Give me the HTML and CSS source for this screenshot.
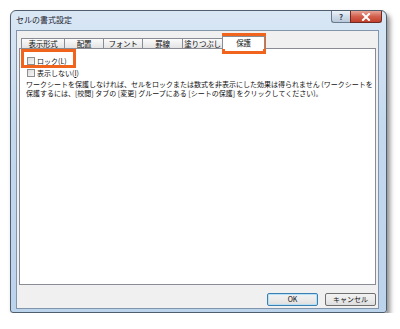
FILE: index.html
```html
<!DOCTYPE html>
<html lang="ja">
<head>
  <meta charset="UTF-8" />
  <title>セルの書式設定</title>
  <link rel="stylesheet" href="styles.css">
</head>
<body>

  <!-- Dialog window -->
  <div class="window">
    <div class="titlebar">
      <span class="title">セルの書式設定</span>
      <div class="caption">
        <span class="btn-help">?</span>
        <span class="btn-close">
          <svg width="10" height="8" viewBox="0 0 10 8">
            <path d="M2 1 L8 7 M8 1 L2 7" stroke="#fff" stroke-width="2" stroke-linecap="square" />
          </svg>
        </span>
      </div>
    </div>

    <div class="client">
      <!-- Tabs -->
      <div class="tabs">
        <span class="tab">表示形式</span>
        <span class="tab">配置</span>
        <span class="tab">フォント</span>
        <span class="tab">罫線</span>
        <span class="tab">塗りつぶし</span>
        <span class="tab active">保護</span>
      </div>

      <div class="panel">
        <label class="check"><span class="box"></span>ロック(<u>L</u>)</label>
        <label class="check"><span class="box"></span>表示しない(<u>I</u>)</label>
        <p class="note">
          ワークシートを保護しなければ、セルをロックまたは数式を非表示にした効果は得られません (ワークシートを<br>
          保護するには、[校閲] タブの [変更] グループにある [シートの保護] をクリックしてください)。
        </p>
      </div>

      <div class="buttons">
        <button type="button" class="default">OK</button>
        <button type="button">キャンセル</button>
      </div>
    </div>

    <!-- Highlight marks -->
    <span class="mark mark-tab"></span>
    <span class="mark mark-lock"></span>
  </div>

</body>
</html>
```

FILE: styles.css
```css
/* Base */
body {
  margin: 0;
  background: #fff;
  font-family: "Noto Sans CJK JP", "Noto Sans", sans-serif;
  color: #111;
}

/* Window frame */
.window {
  position: relative;
  margin: 10px 0 0 10px;
  width: 377px;
  height: 303px;
  box-sizing: border-box;
  border: 1px solid #4f5d6c;
  border-radius: 6px 6px 3px 3px;
  background: linear-gradient(#d9e7f5, #c4d9ee 40%, #bcd3ec);
  box-shadow: 3px 4px 5px rgba(0, 0, 0, 0.45);
  padding: 0 7px 3px 5px;
  display: flex;
  flex-direction: column;
}

.titlebar {
  height: 19px;
  display: flex;
  align-items: flex-start;
}

.title {
  font-size: 8px;
  line-height: 10px;
  margin-top: 4px;
  color: #1e2530;
}

.caption {
  margin-left: auto;
  margin-right: -3px;
  display: flex;
}

.btn-help {
  width: 19px;
  height: 12px;
  box-sizing: border-box;
  border: 1px solid #6a7a8c;
  border-top: none;
  border-right: none;
  border-radius: 0 0 0 3px;
  background: linear-gradient(#eef3f9, #cfdbe8 50%, #bac9da);
  font-size: 8px;
  line-height: 11px;
  text-align: center;
  font-weight: bold;
  color: #3a4656;
}

.btn-close {
  width: 32px;
  height: 12px;
  box-sizing: border-box;
  border: 1px solid #6e2a22;
  border-top: none;
  border-radius: 0 0 3px 0;
  background: linear-gradient(#e8a497, #d2604c 50%, #c2402c);
  display: flex;
  align-items: center;
  justify-content: center;
}

/* Client area */
.client {
  flex: 1;
  border: 1px solid #8395ab;
  background: #f0f0f0;
  padding: 5px 2px 0 2px;
  display: flex;
  flex-direction: column;
}

.tabs {
  height: 12px;
  display: grid;
  grid-template-columns: 44px 39px 39px 40px 40px 40px;
  align-items: end;
  padding-left: 2px;
}

.tab {
  height: 10px;
  box-sizing: border-box;
  border: 1px solid #898c95;
  border-bottom: none;
  border-left: none;
  background: linear-gradient(#fbfbfb, #e4e4e4);
  font-size: 7.5px;
  line-height: 9px;
  letter-spacing: -0.2px;
  text-align: center;
  white-space: nowrap;
}

.tab:first-child {
  border-left: 1px solid #898c95;
}

.tab.active {
  height: 13px;
  margin: 0 -2px -1px -1px;
  border-left: 1px solid #898c95;
  background: #fff;
  position: relative;
  z-index: 1;
  line-height: 11px;
}

.panel {
  height: 237px;
  box-sizing: border-box;
  border: 1px solid #898c95;
  background: #fff;
  padding: 7px 6px 0 7px;
}

.check {
  display: flex;
  align-items: center;
  height: 10px;
  font-size: 7px;
  margin-bottom: 2px;
}

.box {
  width: 8px;
  height: 8px;
  box-sizing: border-box;
  border: 1px solid #8e8f8f;
  background: linear-gradient(135deg, #dcdcdc, #f6f6f6);
  margin-right: 2px;
}

.note {
  margin: 1px 0 0 -1px;
  font-size: 7px;
  line-height: 9px;
  white-space: nowrap;
}

/* Buttons */
.buttons {
  display: flex;
  justify-content: flex-end;
  gap: 7px;
  margin-top: 8px;
}

.buttons button {
  width: 51px;
  height: 13px;
  padding: 0;
  border: 1px solid #707070;
  border-radius: 2px;
  background: linear-gradient(#f2f2f2, #ebebeb 50%, #dddddd);
  font-family: inherit;
  font-size: 7px;
  line-height: 11px;
  color: #111;
}

.buttons button.default {
  border-color: #3c7fb1;
  box-shadow: inset 0 0 0 1px #b6e0f5;
}

/* Orange highlight marks */
.mark {
  position: absolute;
  border: 3px solid #f0641e;
  box-sizing: border-box;
}

.mark-tab {
  left: 211px;
  top: 22px;
  width: 44px;
  height: 21px;
}

.mark-lock {
  left: 10px;
  top: 38px;
  width: 55px;
  height: 19px;
}
```
